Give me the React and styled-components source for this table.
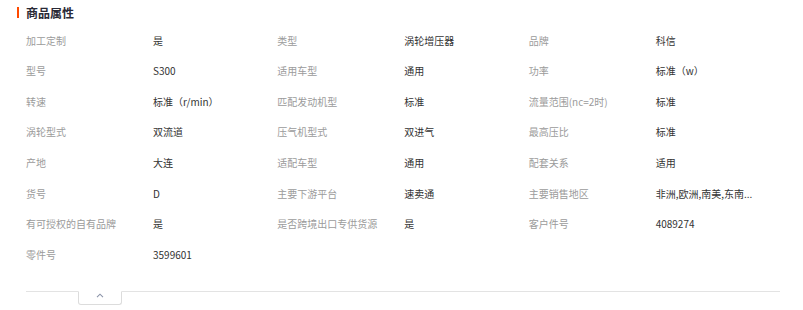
import React from "react";
import styled, { createGlobalStyle } from "styled-components";

const attrs = [
  ["加工定制", "是"],
  ["类型", "涡轮增压器"],
  ["品牌", "科信"],
  ["型号", "S300"],
  ["适用车型", "通用"],
  ["功率", "标准（w）"],
  ["转速", "标准（r/min）"],
  ["匹配发动机型", "标准"],
  ["流量范围(nc=2时)", "标准"],
  ["涡轮型式", "双流道"],
  ["压气机型式", "双进气"],
  ["最高压比", "标准"],
  ["产地", "大连"],
  ["适配车型", "通用"],
  ["配套关系", "适用"],
  ["货号", "D"],
  ["主要下游平台", "速卖通"],
  ["主要销售地区", "非洲,欧洲,南美,东南..."],
  ["有可授权的自有品牌", "是"],
  ["是否跨境出口专供货源", "是"],
  ["客户件号", "4089274"],
  ["零件号", "3599601"],
];

const App = () => {
  return (
    <>
      <GlobalStyle />
      <Section>
        <Header>
          <Mark />
          <Title>商品属性</Title>
        </Header>

        <Grid>
          {attrs.map(([label, value]) => (
            <React.Fragment key={label}>
              <Label>{label}</Label>
              <Value>{value}</Value>
            </React.Fragment>
          ))}
        </Grid>

        <Footer>
          <Toggle type="button">
            <svg width="8" height="5" viewBox="0 0 8 5">
              <path
                d="M1 4.2 L4 1.2 L7 4.2"
                fill="none"
                stroke="#8a93a8"
                strokeWidth="1.1"
              />
            </svg>
          </Toggle>
        </Footer>
      </Section>
    </>
  );
};

export default App;

// Styled Components

const GlobalStyle = createGlobalStyle`
  body {
    margin: 0;
    background: #ffffff;
    font-family: "Noto Sans CJK SC", "Noto Sans", sans-serif;
  }
`;

const Section = styled.div`
  width: 803px;
  height: 310px;
  box-sizing: border-box;
  padding: 5px 23px 0 26px;
`;

const Header = styled.div`
  position: relative;
  display: flex;
  align-items: center;
  height: 15px;
`;

const Mark = styled.span`
  position: absolute;
  left: -9px;
  top: 2px;
  width: 2px;
  height: 11px;
  background-color: #ff4a00;
`;

const Title = styled.h2`
  margin: 0;
  font-size: 12px;
  font-weight: 700;
  color: #2a2a36;
  line-height: 15px;
`;

const Grid = styled.div`
  display: grid;
  grid-template-columns: repeat(3, 127px 124.33px);
  grid-auto-rows: 30.6px;
  margin-top: 4.8px;
  font-size: 10px;
`;

const Label = styled.div`
  display: flex;
  align-items: center;
  color: #9b9b9b;
  white-space: nowrap;
`;

const Value = styled.div`
  display: flex;
  align-items: center;
  color: #333333;
  white-space: nowrap;
`;

const Footer = styled.div`
  margin-top: 21px;
  border-top: 1px solid #e3e3e3;
  padding-left: 52px;
`;

const Toggle = styled.button`
  display: flex;
  align-items: center;
  justify-content: center;
  width: 44px;
  height: 14px;
  margin-top: -1px;
  padding: 0 0 4px;
  background: #ffffff;
  border: 1px solid #dcdcdc;
  border-top-color: #ffffff;
  border-radius: 0 0 3px 3px;
  cursor: pointer;
`;
